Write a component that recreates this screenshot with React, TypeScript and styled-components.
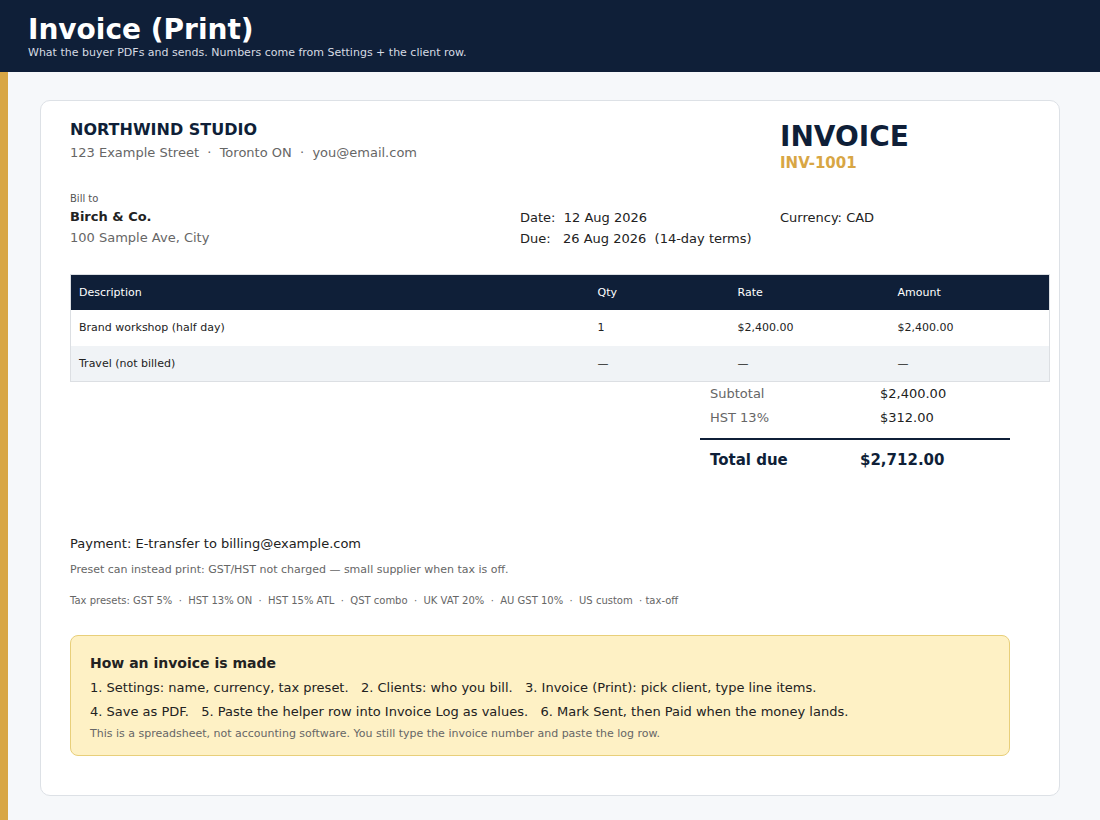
import styled, { createGlobalStyle } from "styled-components";

const NAVY = "#0f1f38";
const GOLD = "#d8a644";

const GlobalStyle = createGlobalStyle`
  html, body {
    margin: 0;
    padding: 0;
    background: #f6f8fa;
    font-family: "DejaVu Sans", "Liberation Sans", sans-serif;
    color: #222;
  }
  * { box-sizing: border-box; }
`;

const Header = styled.header`
  background: ${NAVY};
  color: #fff;
  height: 72px;
  padding: 14px 28px 0;
`;

const Title = styled.h1`
  margin: 0;
  font-size: 28px;
  line-height: 32px;
  font-weight: 700;
`;

const Subtitle = styled.p`
  margin: 0;
  font-size: 11px;
  line-height: 14px;
  color: #d6dbe3;
`;

const Body = styled.div`
  display: flex;
  min-height: 748px;
`;

const Strip = styled.div`
  width: 8px;
  flex: none;
  background: ${GOLD};
`;

const Main = styled.main`
  flex: 1;
  padding: 28px 40px 40px 32px;
`;

const Card = styled.section`
  background: #fff;
  border: 1px solid #dde1e6;
  border-radius: 10px;
  padding: 19px 49px 39px 29px;
`;

const Grid = styled.div<{ $top?: number }>`
  display: grid;
  grid-template-columns: 450px 260px 1fr;
  margin-top: ${(p) => p.$top ?? 0}px;
`;

const Company = styled.div`
  grid-column: 1 / 3;
`;

const CompanyName = styled.div`
  font-size: 16px;
  line-height: 20px;
  font-weight: 700;
  color: ${NAVY};
`;

const Muted = styled.div<{ $size?: number; $top?: number }>`
  font-size: ${(p) => p.$size ?? 13}px;
  line-height: ${(p) => (p.$size ?? 13) + 8}px;
  color: #666;
  margin-top: ${(p) => p.$top ?? 0}px;
  white-space: pre;
`;

const InvoiceBlock = styled.div`
  padding-top: 0px;
`;

const InvoiceWord = styled.div`
  font-size: 28px;
  line-height: 34px;
  font-weight: 700;
  color: ${NAVY};
`;

const InvoiceNo = styled.div`
  font-size: 15px;
  line-height: 18px;
  font-weight: 700;
  color: ${GOLD};
`;

const Label = styled.div`
  font-size: 10px;
  line-height: 14px;
  color: #555;
`;

const ClientName = styled.div`
  font-size: 13px;
  line-height: 20px;
  font-weight: 700;
  color: #222;
  margin-top: 1px;
`;

const Line = styled.div`
  font-size: 13px;
  line-height: 21px;
  color: #222;
  white-space: pre;
`;

const Meta = styled.div`
  padding-top: 15px;
`;

const Table = styled.table`
  width: calc(100% + 40px);
  margin-top: 25px;
  border-collapse: collapse;
  font-size: 11px;
  border: 1px solid #dcdfe3;
`;

const Th = styled.th<{ $w?: number }>`
  background: ${NAVY};
  color: #fff;
  font-weight: 400;
  text-align: left;
  height: 35px;
  padding: 0 8px;
  width: ${(p) => (p.$w ? `${p.$w}px` : "auto")};
`;

const Tr = styled.tr<{ $alt?: boolean }>`
  background: ${(p) => (p.$alt ? "#f0f3f6" : "#fff")};
`;

const Td = styled.td`
  height: 36px;
  padding: 0 8px;
  color: #222;
`;

const Totals = styled.div`
  width: 310px;
  margin-left: auto;
`;

const TotalRow = styled.div<{ $labelW: number; $grand?: boolean }>`
  display: flex;
  padding-left: 10px;
  font-size: ${(p) => (p.$grand ? 15 : 13)}px;
  line-height: ${(p) => (p.$grand ? 40 : 24)}px;
  font-weight: ${(p) => (p.$grand ? 700 : 400)};
  color: ${(p) => (p.$grand ? NAVY : "#222")};
  border-top: ${(p) => (p.$grand ? `2px solid ${NAVY}` : "none")};
  margin-top: ${(p) => (p.$grand ? 8 : 0)}px;

  & > span:first-child {
    width: ${(p) => p.$labelW}px;
    color: ${(p) => (p.$grand ? NAVY : "#666")};
  }
`;

const Payment = styled.div`
  margin-top: 54px;
  font-size: 13px;
  line-height: 20px;
  color: #222;
`;

const Note = styled.div`
  margin-top: 8px;
  font-size: 11px;
  line-height: 16px;
  color: #666;
`;

const Presets = styled.div`
  margin-top: 16px;
  font-size: 10px;
  line-height: 14px;
  color: #666;
  white-space: pre;
`;

const HowBox = styled.div`
  margin-top: 27px;
  background: #fef1c5;
  border: 1px solid #e8cf7a;
  border-radius: 8px;
  padding: 17px 19px 11px;
`;

const HowTitle = styled.div`
  font-size: 14px;
  line-height: 20px;
  font-weight: 700;
  color: #222;
  margin-bottom: 3px;
`;

const Step = styled.div`
  font-size: 13px;
  line-height: 24px;
  color: #222;
  white-space: pre;
`;

const Small = styled.div`
  font-size: 11px;
  line-height: 20px;
  color: #666;
`;

const items = [
  { desc: "Brand workshop (half day)", qty: "1", rate: "$2,400.00", amount: "$2,400.00" },
  { desc: "Travel (not billed)", qty: "—", rate: "—", amount: "—" },
];

export default function App() {
  return (
    <>
      <GlobalStyle />
      <Header>
        <Title>Invoice (Print)</Title>
        <Subtitle>What the buyer PDFs and sends. Numbers come from Settings + the client row.</Subtitle>
      </Header>
      <Body>
        <Strip />
        <Main>
          <Card>
            <Grid>
              <Company>
                <CompanyName>NORTHWIND STUDIO</CompanyName>
                <Muted $top={2}>{"123 Example Street  ·  Toronto ON  ·  you@email.com"}</Muted>
              </Company>
              <InvoiceBlock>
                <InvoiceWord>INVOICE</InvoiceWord>
                <InvoiceNo>INV-1001</InvoiceNo>
              </InvoiceBlock>
            </Grid>

            <Grid $top={20}>
              <div>
                <Label>Bill to</Label>
                <ClientName>Birch &amp; Co.</ClientName>
                <Muted>100 Sample Ave, City</Muted>
              </div>
              <Meta>
                <Line>{"Date:  12 Aug 2026"}</Line>
                <Line>{"Due:   26 Aug 2026  (14-day terms)"}</Line>
              </Meta>
              <Meta>
                <Line>Currency: CAD</Line>
              </Meta>
            </Grid>

            <Table>
              <thead>
                <tr>
                  <Th>Description</Th>
                  <Th $w={140}>Qty</Th>
                  <Th $w={160}>Rate</Th>
                  <Th $w={160}>Amount</Th>
                </tr>
              </thead>
              <tbody>
                {items.map((it, i) => (
                  <Tr key={it.desc} $alt={i % 2 === 1}>
                    <Td>{it.desc}</Td>
                    <Td>{it.qty}</Td>
                    <Td>{it.rate}</Td>
                    <Td>{it.amount}</Td>
                  </Tr>
                ))}
              </tbody>
            </Table>

            <Totals>
              <TotalRow $labelW={170}>
                <span>Subtotal</span>
                <span>$2,400.00</span>
              </TotalRow>
              <TotalRow $labelW={170}>
                <span>HST 13%</span>
                <span>$312.00</span>
              </TotalRow>
              <TotalRow $labelW={150} $grand>
                <span>Total due</span>
                <span>$2,712.00</span>
              </TotalRow>
            </Totals>

            <Payment>Payment: E-transfer to billing@example.com</Payment>
            <Note>Preset can instead print: GST/HST not charged — small supplier when tax is off.</Note>
            <Presets>
              {"Tax presets: GST 5%  ·  HST 13% ON  ·  HST 15% ATL  ·  QST combo  ·  UK VAT 20%  ·  AU GST 10%  ·  US custom  · tax-off"}
            </Presets>

            <HowBox>
              <HowTitle>How an invoice is made</HowTitle>
              <Step>{"1. Settings: name, currency, tax preset.   2. Clients: who you bill.   3. Invoice (Print): pick client, type line items."}</Step>
              <Step>{"4. Save as PDF.   5. Paste the helper row into Invoice Log as values.   6. Mark Sent, then Paid when the money lands."}</Step>
              <Small>This is a spreadsheet, not accounting software. You still type the invoice number and paste the log row.</Small>
            </HowBox>
          </Card>
        </Main>
      </Body>
    </>
  );
}
